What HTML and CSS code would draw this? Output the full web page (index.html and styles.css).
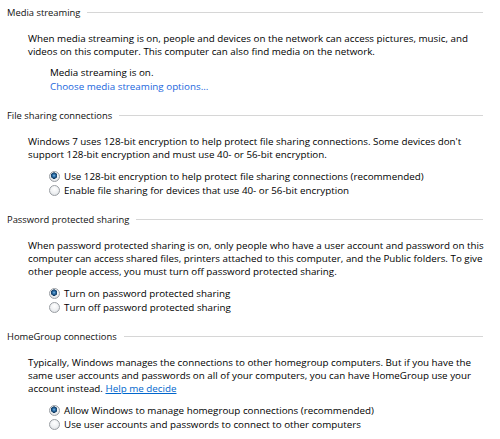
FILE: index.html
```html
<!DOCTYPE html>
<html lang="en">
<head>
<meta charset="utf-8">
<title>Advanced sharing settings</title>
<link rel="stylesheet" href="styles.css">
</head>
<body>
<div class="page">
  <section class="group">
    <div class="group-head"><span class="group-title">Media streaming</span><span class="rule"></span></div>
    <p class="desc">When media streaming is on, people and devices on the network can access pictures, music, and<br>videos on this computer. This computer can also find media on the network.</p>
    <div class="status">
      <div class="status-line">Media streaming is on.</div>
      <a class="link plain" href="#">Choose media streaming options...</a>
    </div>
  </section>

  <section class="group">
    <div class="group-head"><span class="group-title">File sharing connections</span><span class="rule"></span></div>
    <p class="desc">Windows 7 uses 128-bit encryption to help protect file sharing connections. Some devices don't<br>support 128-bit encryption and must use 40- or 56-bit encryption.</p>
    <div class="options">
      <label class="opt"><input type="radio" name="enc" checked><span>Use 128-bit encryption to help protect file sharing connections (recommended)</span></label>
      <label class="opt"><input type="radio" name="enc"><span>Enable file sharing for devices that use 40- or 56-bit encryption</span></label>
    </div>
  </section>

  <section class="group">
    <div class="group-head"><span class="group-title">Password protected sharing</span><span class="rule"></span></div>
    <p class="desc">When password protected sharing is on, only people who have a user account and password on this<br>computer can access shared files, printers attached to this computer, and the Public folders. To give<br>other people access, you must turn off password protected sharing.</p>
    <div class="options">
      <label class="opt"><input type="radio" name="pw" checked><span>Turn on password protected sharing</span></label>
      <label class="opt"><input type="radio" name="pw"><span>Turn off password protected sharing</span></label>
    </div>
  </section>

  <section class="group">
    <div class="group-head"><span class="group-title">HomeGroup connections</span><span class="rule"></span></div>
    <p class="desc">Typically, Windows manages the connections to other homegroup computers. But if you have the<br>same user accounts and passwords on all of your computers, you can have HomeGroup use your<br>account instead. <a class="link" href="#">Help me decide</a></p>
    <div class="options">
      <label class="opt"><input type="radio" name="hg" checked><span>Allow Windows to manage homegroup connections (recommended)</span></label>
      <label class="opt"><input type="radio" name="hg"><span>Use user accounts and passwords to connect to other computers</span></label>
    </div>
  </section>
</div>
</body>
</html>
```

FILE: styles.css
```css
html, body {
  margin: 0;
  padding: 0;
  background: #ffffff;
}

body {
  font-family: "Open Sans", "Noto Sans", "DejaVu Sans", sans-serif;
  font-size: 9.8px;
  line-height: 13px;
  color: #000000;
}

.page {
  padding: 6px 17px 0 7px;
  display: flex;
  flex-direction: column;
  gap: 16px;
}

.group {
  display: flex;
  flex-direction: column;
}

.group-head {
  display: flex;
  align-items: center;
  gap: 7px;
  height: 13px;
}

.group-title {
  white-space: nowrap;
  font-size: 9.4px;
  color: #111111;
}

.rule {
  flex: 1;
  height: 1px;
  background: #d6d6d6;
}

.desc {
  margin: 13px 0 0 21px;
  white-space: nowrap;
}

.status {
  margin: 8px 0 0 43px;
  display: flex;
  flex-direction: column;
  align-items: flex-start;
  gap: 1px;
}

.link {
  color: #0066cc;
  text-decoration: underline;
}

.link.plain {
  color: #2266dd;
  text-decoration: none;
}

.options {
  margin: 8px 0 0 42px;
  display: flex;
  flex-direction: column;
}

.opt {
  display: flex;
  align-items: center;
  gap: 4px;
  height: 14px;
  white-space: nowrap;
}

.opt input {
  appearance: none;
  -webkit-appearance: none;
  margin: 0;
  width: 11px;
  height: 11px;
  border-radius: 50%;
  border: 1px solid #9a9ea3;
  background: radial-gradient(circle at 50% 35%, #ffffff 0%, #eef0f2 55%, #d4d7db 100%);
  box-sizing: border-box;
  flex: none;
}

.opt input:checked {
  background:
    radial-gradient(circle at 45% 40%, #7fbbe8 0, #2b6ea8 1.4px, #123a60 3px, rgba(18,58,96,0) 3.4px),
    radial-gradient(circle at 50% 35%, #ffffff 0%, #eef0f2 55%, #d4d7db 100%);
}
```
